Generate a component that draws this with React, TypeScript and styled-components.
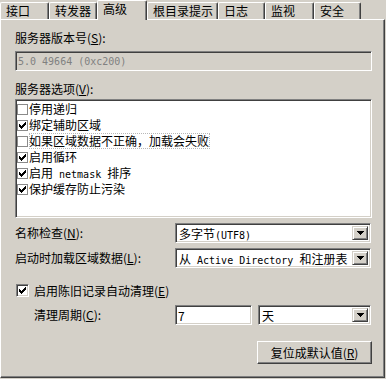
import React from 'react';
import styled, { createGlobalStyle } from 'styled-components';

const GlobalStyle = createGlobalStyle`
  html, body {
    margin: 0;
    padding: 0;
    background: #d4d0c8;
  }
  body {
    font-family: "Noto Sans CJK SC", "Liberation Sans", sans-serif;
    font-size: 12px;
    color: #000;
  }
`;

const Window = styled.div`
  width: 386px;
  height: 379px;
  background: #d4d0c8;
  overflow: hidden;
`;

/** ******
 * tabs
 */
const TabStrip = styled.div`
  position: relative;
  z-index: 1;
  display: flex;
  align-items: flex-end;
  height: 19px;
`;

const Tab = styled.div<{ $w: number; $active?: boolean }>`
  box-sizing: border-box;
  width: ${(p) => p.$w}px;
  height: ${(p) => (p.$active ? 20 : 17)}px;
  margin-bottom: ${(p) => (p.$active ? -1 : 0)}px;
  padding-left: 5px;
  border-top: 1px solid #fff;
  border-left: 1px solid #fff;
  border-right: 1px solid #404040;
  border-radius: 2px 2px 0 0;
  box-shadow: inset -1px 0 #808080;
  background: #d4d0c8;
  line-height: 15px;
  white-space: nowrap;
`;

const Panel = styled.div`
  box-sizing: border-box;
  width: 385px;
  height: 359px;
  padding: 0 12px 0 14px;
  border: 1px solid;
  border-color: #fff #404040 #404040 #fff;
  box-shadow: inset -1px -1px #808080;
  display: flex;
  flex-direction: column;
`;

/** ******
 * form parts
 */
const Mono = styled.span`
  font-family: "DejaVu Sans Mono", "Liberation Mono", monospace;
  font-size: 10px;
`;

const FieldLabel = styled.div<{ $mt?: number; $indent?: number }>`
  margin-top: ${(p) => p.$mt || 0}px;
  padding-left: ${(p) => p.$indent || 0}px;
  height: 14px;
  line-height: 14px;
  white-space: nowrap;
`;

const sunken = `
  box-sizing: border-box;
  border: 1px solid;
  border-color: #808080 #fff #fff #808080;
  box-shadow: inset 1px 1px #404040, inset -1px -1px #d4d0c8;
`;

const TextBox = styled.div<{ $mt?: number; $disabled?: boolean }>`
  ${sunken}
  margin-top: ${(p) => p.$mt || 0}px;
  height: 20px;
  padding-left: 2px;
  display: flex;
  align-items: center;
  background: ${(p) => (p.$disabled ? '#d4d0c8' : '#fff')};
  color: ${(p) => (p.$disabled ? '#808080' : '#000')};
  white-space: nowrap;
`;

const ListBox = styled.div<{ $mt?: number }>`
  ${sunken}
  margin-top: ${(p) => p.$mt || 0}px;
  height: 119px;
  padding: 1px 0 0 1px;
  background: #fff;
`;

const ListItem = styled.div`
  height: 16px;
  display: flex;
  align-items: center;
`;

const ItemText = styled.span<{ $focused?: boolean }>`
  height: 16px;
  line-height: 16px;
  padding-right: 1px;
  white-space: nowrap;
  outline: ${(p) => (p.$focused ? '1px dotted #b8b8b8' : 'none')};
  outline-offset: -1px;
`;

const FlatBox = styled.span`
  box-sizing: border-box;
  width: 11px;
  height: 11px;
  margin-right: 1px;
  border: 1px solid #8a8a8a;
  background: #fff;
  display: flex;
  align-items: center;
  justify-content: center;
  flex: none;
`;

const SunkenBox = styled.span`
  ${sunken}
  width: 13px;
  height: 13px;
  background: #fff;
  display: flex;
  align-items: center;
  justify-content: center;
  flex: none;
`;

const FormRow = styled.div<{ $mt?: number; $cols: string }>`
  margin-top: ${(p) => p.$mt || 0}px;
  display: grid;
  grid-template-columns: ${(p) => p.$cols};
  align-items: center;
  height: 20px;
`;

const Combo = styled.div<{ $ml?: number }>`
  ${sunken}
  margin-left: ${(p) => p.$ml || 0}px;
  height: 20px;
  padding: 2px;
  background: #fff;
  display: flex;
  align-items: stretch;
`;

const ComboValue = styled.div`
  flex: 1;
  padding-left: 1px;
  line-height: 16px;
  white-space: nowrap;
`;

const DropButton = styled.div`
  box-sizing: border-box;
  width: 16px;
  border: 1px solid;
  border-color: #d4d0c8 #404040 #404040 #d4d0c8;
  box-shadow: inset 1px 1px #fff, inset -1px -1px #808080;
  background: #d4d0c8;
  display: flex;
  align-items: center;
  justify-content: center;
`;

const CheckRow = styled.div<{ $mt?: number }>`
  margin-top: ${(p) => p.$mt || 0}px;
  padding-left: 1px;
  height: 13px;
  display: flex;
  align-items: center;
  gap: 5px;
  line-height: 14px;
  white-space: nowrap;
`;

const ButtonRow = styled.div<{ $mt?: number }>`
  margin-top: ${(p) => p.$mt || 0}px;
  display: flex;
  justify-content: flex-end;
`;

const PushButton = styled.div`
  box-sizing: border-box;
  width: 115px;
  height: 23px;
  border: 1px solid;
  border-color: #fff #404040 #404040 #fff;
  box-shadow: inset -1px -1px #808080;
  background: #d4d0c8;
  display: flex;
  align-items: center;
  justify-content: center;
  white-space: nowrap;
`;

/** ******
 * glyphs
 */
const CheckMark: React.FC = () => {
  const cols = [2, 3, 4, 3, 2, 1, 0];
  return (
    <svg width="7" height="7" viewBox="0 0 7 7" shapeRendering="crispEdges">
      {cols.map((y, x) => (
        <rect key={x} x={x} y={y} width="1" height="3" fill="#000" />
      ))}
    </svg>
  );
};

const DownArrow: React.FC = () => (
  <svg width="7" height="4" viewBox="0 0 7 4" shapeRendering="crispEdges">
    <path d="M0 0h7v1H0zM1 1h5v1H1zM2 2h3v1H2zM3 3h1v1H3z" fill="#000" />
  </svg>
);

const options: { label: React.ReactNode; checked: boolean; focused?: boolean }[] = [
  { label: '停用递归', checked: false },
  { label: '绑定辅助区域', checked: true },
  { label: '如果区域数据不正确，加载会失败', checked: false, focused: true },
  { label: '启用循环', checked: true },
  {
    label: (
      <>
        启用<Mono> netmask </Mono>排序
      </>
    ),
    checked: true,
  },
  { label: '保护缓存防止污染', checked: true },
];

const tabs = [
  { label: '接口', w: 49 },
  { label: '转发器', w: 48 },
  { label: '高级', w: 50, active: true },
  { label: '根目录提示', w: 71 },
  { label: '日志', w: 47 },
  { label: '监视', w: 49 },
  { label: '安全', w: 47 },
];

const Select: React.FC<{ children: React.ReactNode; ml?: number }> = ({ children, ml }) => (
  <Combo $ml={ml}>
    <ComboValue>{children}</ComboValue>
    <DropButton>
      <DownArrow />
    </DropButton>
  </Combo>
);

export default function App() {
  return (
    <Window>
      <GlobalStyle />
      <TabStrip>
        {tabs.map((t) => (
          <Tab key={t.label} $w={t.w} $active={t.active}>
            {t.label}
          </Tab>
        ))}
      </TabStrip>
      <Panel>
        <FieldLabel $mt={11}>
          服务器版本号(<u>S</u>):
        </FieldLabel>
        <TextBox $mt={6} $disabled>
          <Mono>5.0 49664 (0xc200)</Mono>
        </TextBox>

        <FieldLabel $mt={11}>
          服务器选项(<u>V</u>):
        </FieldLabel>
        <ListBox $mt={3}>
          {options.map((o, i) => (
            <ListItem key={i}>
              <FlatBox>{o.checked && <CheckMark />}</FlatBox>
              <ItemText $focused={o.focused}>{o.label}</ItemText>
            </ListItem>
          ))}
        </ListBox>

        <FormRow $mt={5} $cols="160px 196px">
          <FieldLabel>
            名称检查(<u>N</u>):
          </FieldLabel>
          <Select>
            多字节<Mono>(UTF8)</Mono>
          </Select>
        </FormRow>
        <FormRow $mt={5} $cols="160px 196px">
          <FieldLabel>
            启动时加载区域数据(<u>L</u>):
          </FieldLabel>
          <Select>
            从<Mono> Active Directory </Mono>和注册表
          </Select>
        </FormRow>

        <CheckRow $mt={16}>
          <SunkenBox>
            <CheckMark />
          </SunkenBox>
          <span>
            启用陈旧记录自动清理(<u>E</u>)
          </span>
        </CheckRow>

        <FormRow $mt={8} $cols="160px 77px 119px">
          <FieldLabel $indent={19}>
            清理周期(<u>C</u>):
          </FieldLabel>
          <TextBox>7</TextBox>
          <Select ml={6}>天</Select>
        </FormRow>

        <ButtonRow $mt={16}>
          <PushButton>
            复位成默认值(<u>R</u>)
          </PushButton>
        </ButtonRow>
      </Panel>
    </Window>
  );
}
